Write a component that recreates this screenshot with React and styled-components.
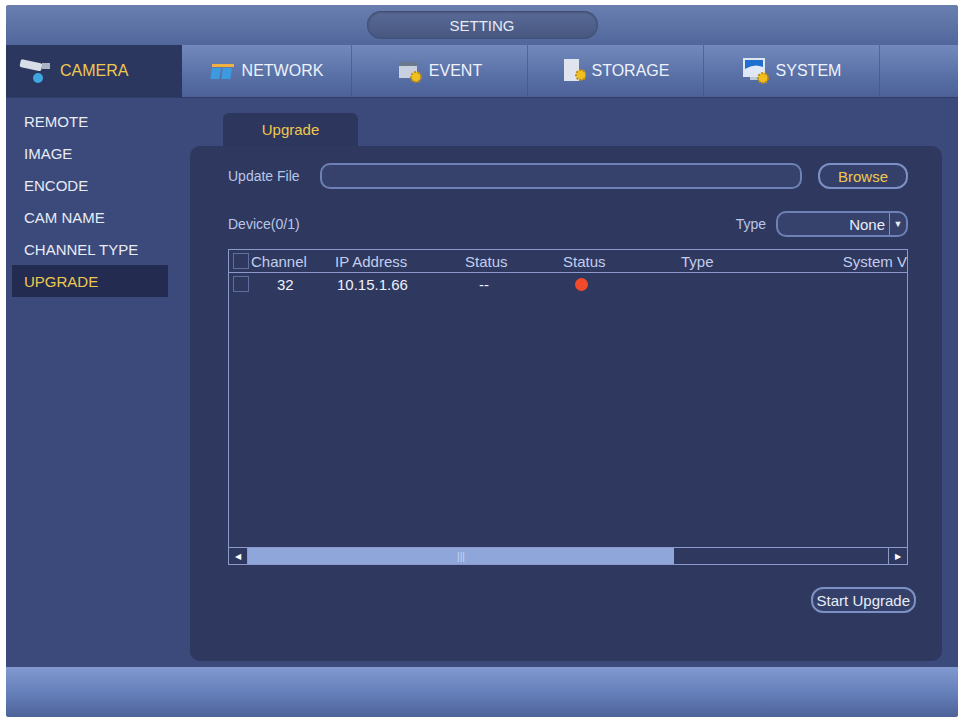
import React from 'react'
import styled, { createGlobalStyle } from 'styled-components'

const Global = createGlobalStyle`
  body { margin: 0; background: #fff; font-family: "Liberation Sans", Arial, sans-serif; }
`

const Frame = styled.div`
  margin: 5px 4px 6px 6px;
  height: 712px;
  display: flex;
  flex-direction: column;
  background: #3b4a7a;
  border-radius: 3px;
  overflow: hidden;
`

const TitleBar = styled.div`
  height: 40px;
  display: flex;
  align-items: center;
  justify-content: center;
  background: linear-gradient(#6a7fb0, #51669b);
`

const TitlePill = styled.div`
  width: 231px;
  height: 28px;
  border-radius: 14px;
  background: linear-gradient(#5a6b98, #46567f);
  box-shadow: inset 0 1px 3px rgba(0,0,0,0.4);
  color: #e6ebf5;
  font-size: 15px;
  display: flex;
  align-items: center;
  justify-content: center;
`

const TabBar = styled.div`
  height: 52px;
  display: flex;
  background: linear-gradient(#7389bd, #5870a6 60%, #4c6198);
  border-bottom: 1px solid #2f3d66;
`

const Tab = styled.div`
  width: ${p => p.w}px;
  display: flex;
  align-items: center;
  justify-content: ${p => (p.active ? 'flex-start' : 'center')};
  padding-left: ${p => (p.active ? 12 : 0)}px;
  gap: 6px;
  font-size: 16px;
  color: ${p => (p.active ? '#f0c850' : '#eef2fa')};
  background: ${p => (p.active ? '#2c3760' : 'transparent')};
  border-right: ${p => (p.active ? 'none' : '1px solid rgba(60,80,130,0.6)')};
  box-sizing: border-box;
`

const Main = styled.div`
  flex: 1;
  display: flex;
`

const Sidebar = styled.div`
  width: 174px;
  padding-top: 7px;
  display: flex;
  flex-direction: column;
`

const MenuItem = styled.div`
  height: 32px;
  margin-left: 6px;
  width: 156px;
  padding-left: 12px;
  box-sizing: border-box;
  display: flex;
  align-items: center;
  font-size: 15px;
  color: ${p => (p.active ? '#f0c850' : '#e8ecf6')};
  background: ${p => (p.active ? '#232c50' : 'transparent')};
`

const Content = styled.div`
  flex: 1;
  display: flex;
  flex-direction: column;
  padding: 15px 16px 6px 10px;
`

const SubTab = styled.div`
  margin-left: 33px;
  width: 135px;
  height: 33px;
  border-radius: 6px 6px 0 0;
  background: #2d365c;
  color: #f0c850;
  font-size: 15px;
  display: flex;
  align-items: center;
  justify-content: center;
`

const Panel = styled.div`
  flex: 1;
  background: #2f385e;
  border-radius: 10px;
  padding: 17px 34px 0 38px;
  display: flex;
  flex-direction: column;
`

const Row = styled.div`
  display: flex;
  align-items: center;
  gap: ${p => p.gap || 10}px;
  margin-bottom: ${p => p.mb || 0}px;
  justify-content: ${p => p.justify || 'flex-start'};
`

const Label = styled.span`
  color: #b9c6ea;
  font-size: 14px;
`

const Input = styled.div`
  flex: ${p => (p.grow ? 1 : 'none')};
  width: ${p => p.w || 0}px;
  height: 22px;
  border: 2px solid #6e80b4;
  border-radius: 10px;
  background: #36426c;
  display: flex;
  align-items: center;
  justify-content: flex-end;
  color: #e8ecf6;
  font-size: 15px;
`

const PillButton = styled.div`
  height: 22px;
  padding: 0 ${p => p.pad || 8}px;
  border: 2px solid #7d90c4;
  border-radius: 12px;
  background: #34406a;
  color: ${p => p.color || '#e8ecf6'};
  font-size: 15px;
  display: flex;
  align-items: center;
  justify-content: center;
`

const Caret = styled.span`
  width: 16px;
  height: 100%;
  border-left: 1px solid #8090c0;
  display: flex;
  align-items: center;
  justify-content: center;
  margin-left: 4px;
  font-size: 9px;
`

const Table = styled.div`
  height: 314px;
  border: 1px solid #8b9acb;
  display: flex;
  flex-direction: column;
`

const HeadRow = styled.div`
  display: grid;
  grid-template-columns: 22px 78px 120px 98px 110px 1fr 95px;
  height: 22px;
  align-items: center;
  border-bottom: 1px solid #8b9acb;
  color: #c2ceee;
  font-size: 15px;
`

const DataRow = styled(HeadRow)`
  border-bottom: none;
  color: #eef2fa;
`

const Cell = styled.span`
  text-align: ${p => p.align || 'left'};
  padding-left: ${p => p.pl || 0}px;
  white-space: nowrap;
  overflow: hidden;
`

const Check = styled.span`
  width: 14px;
  height: 14px;
  margin-left: 4px;
  border: 1px solid #5f6e9c;
`

const Dot = styled.span`
  display: inline-block;
  width: 13px;
  height: 13px;
  border-radius: 50%;
  background: #f24a2a;
  margin-left: 28px;
  margin-top: 4px;
`

const TableBody = styled.div`
  flex: 1;
`

const ScrollBar = styled.div`
  height: 16px;
  border-top: 1px solid #8b9acb;
  display: flex;
  align-items: stretch;
  font-size: 8px;
  color: #fff;
`

const ScrollArrow = styled.span`
  width: 18px;
  display: flex;
  align-items: center;
  justify-content: center;
  border-${p => p.side}: 1px solid #8b9acb;
`

const Thumb = styled.div`
  width: 426px;
  background: #8fa6da;
  display: flex;
  align-items: center;
  justify-content: center;
  color: #c8d6f4;
  font-size: 10px;
`

const Footer = styled.div`
  height: 50px;
  background: linear-gradient(#8199cf, #6680bb 50%, #4d6399);
`

const Icon = ({ kind }) => {
  if (kind === 'camera')
    return (
      <svg width="36" height="26" viewBox="0 0 36 26">
        <rect x="2" y="3" width="22" height="8" rx="2" fill="#d8dee8" transform="rotate(12 12 7)" />
        <rect x="24" y="5" width="8" height="6" fill="#a9b3c4" />
        <circle cx="20" cy="20" r="5" fill="#3fa7e0" />
      </svg>
    )
  if (kind === 'network')
    return (
      <svg width="26" height="22" viewBox="0 0 26 22">
        <rect x="2" y="4" width="22" height="3" fill="#f0b040" />
        <rect x="3" y="8" width="9" height="11" fill="#3c9be0" transform="skewX(-8)" />
        <rect x="14" y="8" width="9" height="11" fill="#3c9be0" transform="skewX(-8)" />
      </svg>
    )
  const Gear = () => <circle cx="19" cy="18" r="5" fill="#f0c020" stroke="#c08a10" strokeWidth="2" strokeDasharray="2 1.5" />
  if (kind === 'event')
    return (
      <svg width="26" height="24" viewBox="0 0 26 24">
        <rect x="2" y="3" width="18" height="16" fill="#c8d0e0" />
        <rect x="2" y="3" width="18" height="4" fill="#6a7890" />
        <Gear />
      </svg>
    )
  if (kind === 'storage')
    return (
      <svg width="24" height="28" viewBox="0 0 24 28">
        <rect x="2" y="2" width="15" height="22" fill="#dfe4ee" />
        <Gear />
      </svg>
    )
  return (
    <svg width="28" height="28" viewBox="0 0 28 28">
      <rect x="2" y="2" width="20" height="17" fill="#1f6fd0" stroke="#e0e6f0" strokeWidth="2" />
      <path d="M3 12 Q12 6 21 10 L21 18 L3 18 Z" fill="#dfe8f8" />
      <rect x="8" y="20" width="8" height="3" fill="#c0c8d8" />
      <circle cx="21" cy="21" r="5" fill="#f0c020" stroke="#c08a10" strokeWidth="2" strokeDasharray="2 1.5" />
    </svg>
  )
}

const tabs = [
  { name: 'NETWORK', icon: 'network', w: 170 },
  { name: 'EVENT', icon: 'event', w: 176 },
  { name: 'STORAGE', icon: 'storage', w: 176 },
  { name: 'SYSTEM', icon: 'system', w: 176 },
]

const menu = ['REMOTE', 'IMAGE', 'ENCODE', 'CAM NAME', 'CHANNEL TYPE', 'UPGRADE']

export default function App() {
  return (
    <>
      <Global />
      <Frame>
        <TitleBar>
          <TitlePill>SETTING</TitlePill>
        </TitleBar>
        <TabBar>
          <Tab active w={176}>
            <Icon kind="camera" />
            CAMERA
          </Tab>
          {tabs.map(t => (
            <Tab key={t.name} w={t.w}>
              <Icon kind={t.icon} />
              {t.name}
            </Tab>
          ))}
        </TabBar>
        <Main>
          <Sidebar>
            {menu.map(m => (
              <MenuItem key={m} active={m === 'UPGRADE'}>
                {m}
              </MenuItem>
            ))}
          </Sidebar>
          <Content>
            <SubTab>Upgrade</SubTab>
            <Panel>
              <Row gap={12} mb={22}>
                <Label>Update File</Label>
                <Input grow style={{ marginLeft: 8 }} />
                <PillButton color="#f0c850" pad={18} style={{ marginLeft: 4 }}>
                  Browse
                </PillButton>
              </Row>
              <Row justify="space-between" mb={12}>
                <Label>Device(0/1)</Label>
                <Row gap={10}>
                  <Label>Type</Label>
                  <Input w={128}>
                    None
                    <Caret>▼</Caret>
                  </Input>
                </Row>
              </Row>
              <Table>
                <HeadRow>
                  <Check />
                  <Cell>Channel</Cell>
                  <Cell pl={6}>IP Address</Cell>
                  <Cell pl={16}>Status</Cell>
                  <Cell pl={16}>Status</Cell>
                  <Cell pl={24}>Type</Cell>
                  <Cell align="right">System V</Cell>
                </HeadRow>
                <DataRow>
                  <Check />
                  <Cell pl={26}>32</Cell>
                  <Cell pl={8}>10.15.1.66</Cell>
                  <Cell pl={30}>--</Cell>
                  <Cell><Dot /></Cell>
                  <Cell />
                  <Cell />
                </DataRow>
                <TableBody />
                <ScrollBar>
                  <ScrollArrow side="right">◀</ScrollArrow>
                  <Thumb>|||</Thumb>
                  <div style={{ flex: 1 }} />
                  <ScrollArrow side="left">▶</ScrollArrow>
                </ScrollBar>
              </Table>
              <Row justify="flex-end" style={{ marginTop: 22, marginRight: -8 }}>
                <PillButton pad={4}>Start Upgrade</PillButton>
              </Row>
            </Panel>
          </Content>
        </Main>
        <Footer />
      </Frame>
    </>
  )
}
